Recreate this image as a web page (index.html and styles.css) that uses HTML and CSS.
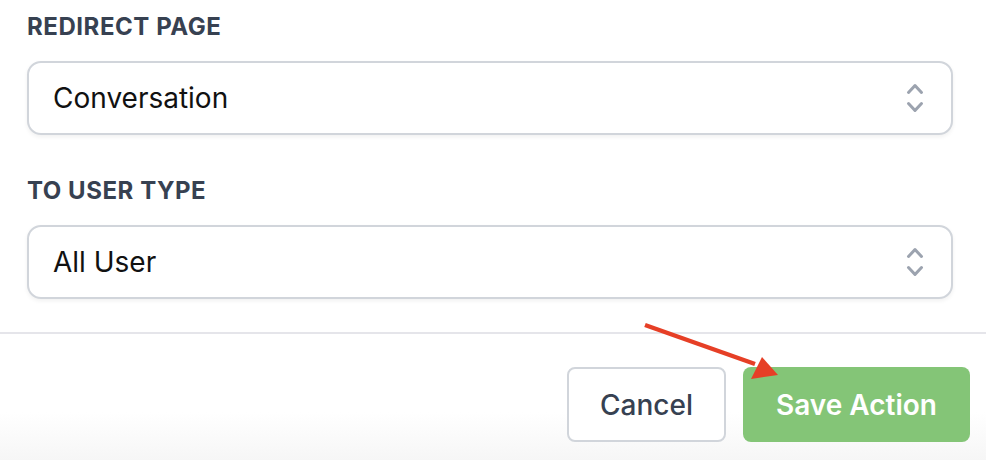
FILE: index.html
```html
<!DOCTYPE html>
<html>
<head>
<meta charset="utf-8">
<link rel="stylesheet" href="styles.css">
</head>
<body>
<div class="page">
  <div class="fields">
    <div class="field">
      <div class="label">Redirect Page</div>
      <div class="select">
        <span class="value">Conversation</span>
        <svg class="chev" viewBox="0 0 20 20" fill="currentColor"><path fill-rule="evenodd" d="M10 3a.75.75 0 01.55.24l3.25 3.5a.75.75 0 11-1.1 1.02L10 4.852 7.3 7.76a.75.75 0 01-1.1-1.02l3.25-3.5A.75.75 0 0110 3zm-3.76 9.2a.75.75 0 011.060.04l2.7 2.908 2.7-2.908a.75.75 0 111.1 1.02l-3.25 3.5a.75.75 0 01-1.1 0l-3.250-3.5a.75.75 0 01.04-1.06z" clip-rule="evenodd"/></svg>
      </div>
    </div>
    <div class="field">
      <div class="label">To User Type</div>
      <div class="select">
        <span class="value">All User</span>
        <svg class="chev" viewBox="0 0 20 20" fill="currentColor"><path fill-rule="evenodd" d="M10 3a.75.75 0 01.55.24l3.25 3.5a.75.75 0 11-1.1 1.02L10 4.852 7.3 7.76a.75.75 0 01-1.1-1.02l3.25-3.5A.75.75 0 0110 3zm-3.76 9.2a.75.75 0 011.06.04l2.7 2.908 2.7-2.908a.75.75 0 111.1 1.02l-3.25 3.5a.75.75 0 01-1.1 0l-3.25-3.5a.75.75 0 01.04-1.06z" clip-rule="evenodd"/></svg>
      </div>
    </div>
  </div>
  <div class="footer">
    <button class="btn cancel">Cancel</button>
    <button class="btn save">Save Action</button>
    <svg class="arrow" width="150" height="70" viewBox="0 0 150 70">
      <line x1="5" y1="3" x2="115" y2="42" stroke="#e63f26" stroke-width="4.5" stroke-linecap="butt"/>
      <polygon points="138,53 111,57 122,35" fill="#e63f26"/>
    </svg>
  </div>
</div>
</body>
</html>
```
FILE: styles.css
```css
* { box-sizing: border-box; }
html, body { margin: 0; padding: 0; background: #fff; }
body {
  width: 986px;
  height: 460px;
  overflow: hidden;
  font-family: Inter, "Liberation Sans", sans-serif;
  background: linear-gradient(to bottom, #ffffff 0, #ffffff 412px, #f6f6f6 460px);
}
.page { display: flex; flex-direction: column; height: 460px; }
.fields {
  padding: 11px 33px 0 27px;
  display: flex;
  flex-direction: column;
  gap: 40px;
}
.label {
  font-size: 24px;
  font-weight: 700;
  line-height: 32px;
  color: #374151;
  text-transform: uppercase;
  letter-spacing: 0.55px;
  margin-bottom: 18px;
}
.select {
  height: 74px;
  border: 2px solid #d1d5db;
  border-radius: 14px;
  background: #fff;
  box-shadow: 0 2px 4px rgba(0,0,0,0.06);
  display: flex;
  align-items: center;
  justify-content: space-between;
  padding: 0 16px 0 24px;
}
.value {
  font-size: 28px;
  color: #111;
  line-height: 34px;
}
.chev { width: 40px; height: 40px; color: #9ca3af; }
.footer {
  margin-top: 33px;
  border-top: 2px solid #e5e5ea;
  padding: 33px 16px 0 0;
  display: flex;
  justify-content: flex-end;
  gap: 17px;
  position: relative;
}
.btn {
  height: 75px;
  border-radius: 8px;
  font-family: Inter, "Liberation Sans", sans-serif;
  font-size: 28px;
  cursor: pointer;
}
.cancel {
  width: 159px;
  background: #fff;
  border: 2px solid #d1d5db;
  color: #374151;
  font-weight: 500;
}
.save {
  width: 227px;
  background: #84c577;
  border: none;
  color: #fff;
  font-weight: 600;
}
.arrow {
  position: absolute;
  left: 640px;
  top: -12px;
}
```
